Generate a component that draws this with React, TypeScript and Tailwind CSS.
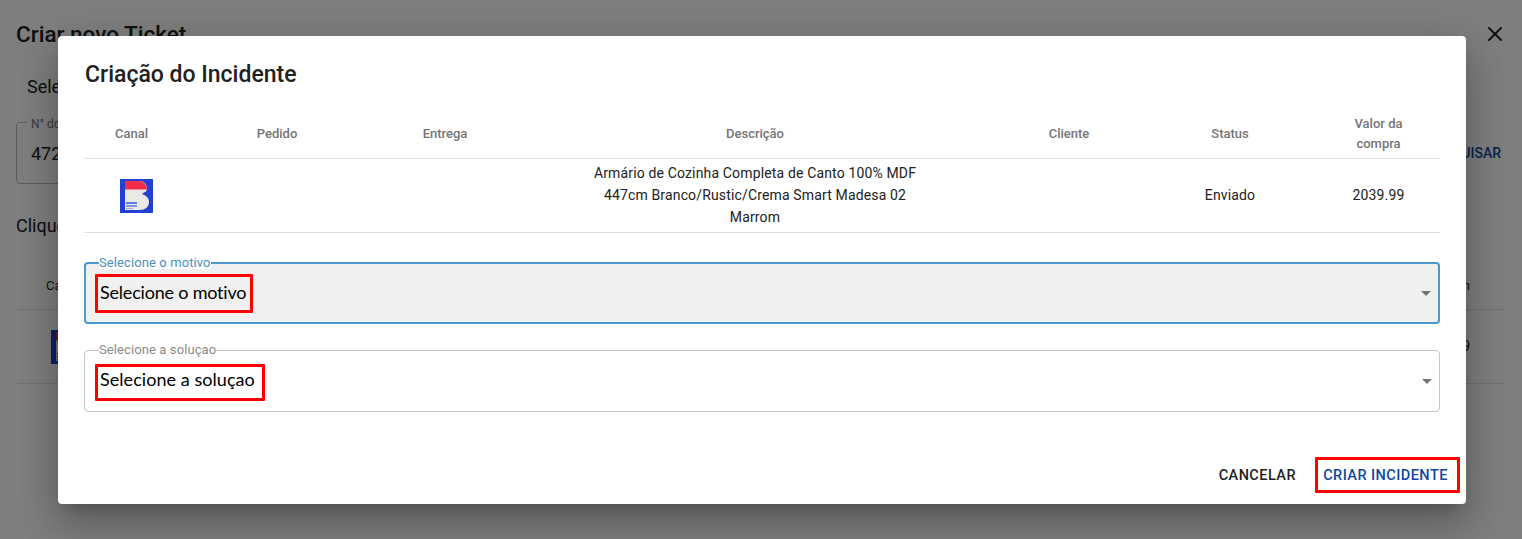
import { X } from 'lucide-react';

const columns = ['Canal', 'Pedido', 'Entrega', 'Descrição', 'Cliente', 'Status'];

const StoreLogo = ({ className }: { className: string }) => (
  <svg className={className} viewBox="0 0 33 34" xmlns="http://www.w3.org/2000/svg">
    <rect width="33" height="34" fill="#2340d2" />
    <path d="M5 2H19C24 2 27 5 27 10C27 12 25.5 13 23 14C22 14.5 22 15 23 15.5C26.5 17 29 19 29 23C29 28 25 31 20 31H5Z" fill="#ebe9e6" />
    <path d="M5 2H19C23.5 2 26.5 5 27 10.5H5Z" fill="#f42c4c" />
    <rect x="6" y="23" width="11" height="2" fill="#5f7be0" />
    <rect x="6" y="26" width="11" height="2" fill="#7f93e4" />
    <rect x="6" y="29" width="7" height="1" fill="#a3b1ea" />
  </svg>
);

const Highlighted = ({ className, children }: { className: string; children: React.ReactNode }) => (
  <div className={`flex items-center border-[3px] border-[#ff0000] rounded-[1px] ${className}`}>{children}</div>
);

const Caret = () => <div className="w-0 h-0 border-x-[5px] border-x-transparent border-t-[5px] border-t-[#757575]" />;

const SelectField = ({
  label,
  focused,
  boxClass,
  textClass,
}: {
  label: string;
  focused?: boolean;
  boxClass: string;
  textClass: string;
}) => (
  <div
    className={`relative flex items-center justify-between h-[62px] rounded-[4px] ${
      focused ? 'pl-[9px] pr-[7px] border-2 border-[#4a9acf] bg-[#f0f0f0]' : 'pl-[10px] pr-[7px] border border-[#c4c4c4] bg-white'
    }`}
  >
    <span
      className={`absolute -top-[8px] bg-white text-[13px] leading-[13px] tracking-[0.1px] ${
        focused ? 'left-[13px] text-[#4a8fbf]' : 'left-[14px] text-[#8c8c8c]'
      }`}
    >
      {label}
    </span>
    <Highlighted className={`pl-[2px] ${boxClass}`}>
      <span className={`font-['Lato',sans-serif] text-[18px] text-black whitespace-nowrap -mt-[2px] ${textClass}`}>{label}</span>
    </Highlighted>
    <Caret />
  </div>
);

export default function App() {
  return (
    <div className="relative h-screen overflow-hidden bg-white font-['Roboto',sans-serif] text-[#212121]">
      {/* Pagina por tras do modal */}
      <div className="px-4">
        <div className="flex justify-between items-center pt-[22px]">
          <h2 className="text-[22.5px] leading-6 font-medium">Criar novo Ticket</h2>
          <X className="w-6 h-6 -mr-[1px]" strokeWidth={2} />
        </div>
        <p className="mt-[29px] ml-[11px] text-[18px] leading-6">Selecione o pedido</p>
        <div className="flex justify-between items-center mt-[23px]">
          <div className="relative flex items-center w-[400px] h-[62px] px-[14px] border border-[#bdbdbd] rounded-[4px] text-[18px]">
            <span className="absolute left-[10px] -top-[8px] px-1 bg-white text-[12px] text-[#757575]">N° do pedido</span>
            4720
          </div>
          <span className="text-[14px] font-medium text-[#0d47a1] mr-[5px]">PESQUISAR</span>
        </div>
        <p className="mt-[30px] text-[18px] leading-6">Clique no pedido</p>
        <div className="w-[1488px] mt-[25px]">
          <div className="flex justify-between h-[47px] pt-[13px] pl-[30px] pr-[34px] border-b border-[#e0e0e0] text-[13px]">
            <span>Canal</span>
            <span>n</span>
          </div>
          <div className="flex justify-between items-center h-[74px] pl-[35px] pr-[34px] border-b border-[#e0e0e0] text-[14px]">
            <StoreLogo className="w-[33px] h-[34px]" />
            <span>9</span>
          </div>
        </div>
      </div>

      {/* Overlay */}
      <div className="absolute inset-0 bg-black/50 pt-9 pl-[58px]">
        <div className="flex flex-col w-[1408px] h-[468px] bg-white rounded-[4px] shadow-[0_11px_15px_-7px_rgba(0,0,0,0.2),0_24px_38px_3px_rgba(0,0,0,0.14),0_9px_46px_8px_rgba(0,0,0,0.12)]">
          <h2 className="pl-[27px] pt-[23px] text-[23px] leading-8 font-medium text-[#212121]">Criação do Incidente</h2>

          <div className="mx-[26px] mt-[19px] text-center">
            <div className="grid grid-cols-[95px_196px_140px_480px_148px_174px_123px] items-center h-[49px] border-b border-[#e0e0e0] text-[13px] font-medium text-[#757575]">
              {columns.map((c) => (
                <span key={c}>{c}</span>
              ))}
              <span className="leading-[20px] px-[30px]">Valor da compra</span>
            </div>
            <div className="grid grid-cols-[95px_196px_140px_480px_148px_174px_123px] items-center h-[74px] pb-[2px] border-b border-[#e0e0e0] text-[14px] leading-[22px] tracking-[0.15px] text-[#212121]">
              <div className="flex justify-center pl-[10px] mt-[2px]">
                <StoreLogo className="w-[33px] h-[34px]" />
              </div>
              <span />
              <span />
              <span className="px-[70px]">Armário de Cozinha Completa de Canto 100% MDF 447cm Branco/Rustic/Crema Smart Madesa 02 Marrom</span>
              <span />
              <span>Enviado</span>
              <span>2039.99</span>
            </div>
          </div>

          <div className="flex flex-col gap-[26px] mx-[26px] mt-[29px]">
            <SelectField label="Selecione o motivo" focused boxClass="w-[158px] h-[39px]" textClass="tracking-[-0.2px]" />
            <SelectField label="Selecione a soluçao" boxClass="w-[170px] h-[37px] mt-[3px] pb-[4px]" textClass="tracking-[0.05px]" />
          </div>

          <div className="flex justify-end items-center gap-[19px] mt-[45px] pr-[6px]">
            <span className="mt-[2px] text-[14.5px] font-medium tracking-[0.45px] text-[#212121]">CANCELAR</span>
            <Highlighted className="justify-center w-[145px] h-[36px] pr-[4px] pt-[2px]">
              <span className="text-[14.5px] font-medium tracking-[0.45px] text-[#0d47a1]">CRIAR INCIDENTE</span>
            </Highlighted>
          </div>
        </div>
      </div>
    </div>
  );
}
